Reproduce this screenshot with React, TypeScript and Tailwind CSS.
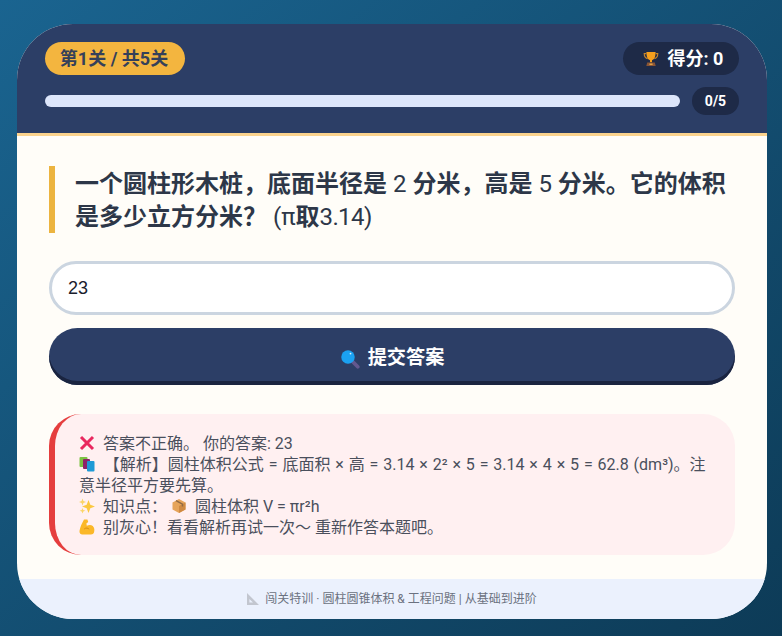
import React from 'react';

const sans = "font-['Roboto','Noto_Sans_CJK_SC',sans-serif]";

const IconBox: React.FC<{ size?: number; children: React.ReactNode }> = ({ size = 16, children }) => (
  <svg viewBox="0 0 16 16" width={size} height={size} className="mr-1 inline-block shrink-0 align-[-2px]">
    {children}
  </svg>
);

const Trophy = () => (
  <svg viewBox="0 0 16 16" width={16} height={18} className="shrink-0">
    <path d="M3.2 2.6H1.2c0 3 1.2 4.6 3.4 5M12.8 2.6h2c0 3-1.2 4.6-3.4 5" fill="none" stroke="#c9852a" strokeWidth="1.1" />
    <path d="M3.4 1h9.2c0 4.4-1 7.6-3.6 8.2v2H7V9.2C4.4 8.6 3.4 5.4 3.4 1z" fill="#f59f1d" />
    <path d="M4.2 11.4h7.6l.9 3.6H3.3z" fill="#8a5535" />
    <rect x="6.4" y="12.6" width="3.2" height="1.2" fill="#f2b34c" />
  </svg>
);

const Search = () => (
  <svg viewBox="0 0 16 16" width={20} height={20} className="shrink-0">
    <path d="M10 10l4.2 4.2" stroke="#62588f" strokeWidth="3" strokeLinecap="round" />
    <circle cx="6.4" cy="6.4" r="5.4" fill="#1ba1f1" />
    <circle cx="8.4" cy="3.6" r="0.7" fill="#d8f1ff" />
  </svg>
);

const Cross = () => (
  <IconBox>
    <path d="M2 2l12 12M14 2L2 14" stroke="#e9285f" strokeWidth="3" />
  </IconBox>
);

const Books = () => (
  <IconBox>
    <rect x="0.5" y="1" width="8" height="10" rx="1" fill="#7cc242" />
    <rect x="4" y="3" width="7" height="10" rx="1" fill="#8f2268" />
    <rect x="8" y="5" width="7.5" height="10.5" rx="1" fill="#1f9ad6" />
  </IconBox>
);

const Sparkles = () => (
  <IconBox>
    <path d="M9.5 2l1.8 4.7L16 8.5l-4.7 1.8L9.5 15l-1.8-4.7L3 8.5l4.7-1.8z" fill="#fbc83f" />
    <path d="M3.5 .5l.9 2.6L7 4l-2.6.9-.9 2.6-.9-2.6L0 4l2.6-.9z" fill="#fbd566" />
    <path d="M3.5 10l.8 2 2 .8-2 .8-.8 2-.8-2-2-.8 2-.8z" fill="#fbd566" />
  </IconBox>
);

const Package = () => (
  <IconBox>
    <path d="M8 1l6.5 3.4v7.2L8 15l-6.5-3.4V4.4z" fill="#e6a45a" />
    <path d="M8 8l6.5-3.6v7.2L8 15z" fill="#cf8a42" />
    <path d="M5 2.6l6.5 3.6v2.4" fill="none" stroke="#8f6a44" strokeWidth="1.4" />
  </IconBox>
);

const Muscle = () => (
  <IconBox>
    <path d="M5 .5h3.4l.8 2.6-1.8 1.3.4 2.4C9.8 5.6 12.2 5.6 13.8 7c1.8 1.5 1.8 4.6 1.2 6.4-.4 1.3-1.5 2-3 2H3.4C1.4 15.4.2 14 .5 12c.5-3.4 2.4-7.8 4.5-11.5z" fill="#fbb829" />
    <path d="M5.2 10c1.6-1.4 4-1.2 5 .4" fill="none" stroke="#d98d14" strokeWidth="1" />
  </IconBox>
);

const SetSquare = () => (
  <svg viewBox="0 0 12 12" width={12} height={12} className="inline-block shrink-0">
    <path fillRule="evenodd" d="M0 0l12 12H0zM2.4 6v3.6H6z" fill="#c2c6cf" />
  </svg>
);

const App: React.FC = () => (
  <div className={`flex h-[636px] w-[782px] items-start overflow-hidden bg-gradient-to-br from-[#1a6490] to-[#0d3b57] pt-6 pl-[17px] ${sans}`}>
    <div className="flex h-[595px] w-[750px] flex-col overflow-hidden rounded-[56px] bg-[#fffdf8]">
      <div className="h-[112px] shrink-0 border-b-[3px] border-[#fbd38d] bg-[#2c3e66] px-7 pt-[18px]">
        <div className="flex items-center justify-between">
          <span className="flex h-[33px] w-[140px] items-center justify-center rounded-full bg-[#f3b53f] pr-0.5 text-lg font-bold text-[#34405a]">第1关 / 共5关</span>
          <span className="flex h-[33px] w-[116px] items-center justify-center gap-[9px] rounded-full bg-[#1e2a47] pl-1 text-lg font-bold text-white">
            <Trophy />
            <span>得分: 0</span>
          </span>
        </div>
        <div className="mt-3 flex items-center gap-3">
          <div className="h-3 flex-1 rounded-full bg-[#dde6fb]" />
          <span className="flex h-7 w-[47px] items-center justify-center rounded-full bg-[#1e2a47] text-sm font-bold text-white">0/5</span>
        </div>
      </div>

      <div className="flex-1 px-8 pt-[30px]">
        <h1 className="h-[67px] border-l-[6px] border-[#ecb440] pt-0.5 pl-5 text-2xl leading-[33px] font-bold text-[#2d3748]">
          一个圆柱形木桩，底面半径是 <span className="font-normal">2</span> 分米，高是 <span className="font-normal">5</span> 分米。它的体积是多少立方分米？ <span className="font-normal">(π</span>取<span className="font-normal tracking-[-0.6px]">3.14)</span>
        </h1>
        <input
          readOnly
          value="23"
          className="mt-7 block h-[54px] w-full rounded-full border-[3px] border-[#cbd5e0] bg-white pl-4 font-['Liberation_Sans',sans-serif] text-lg text-[#1a202c] outline-none"
        />
        <button className="mt-[13px] flex h-[57px] w-full items-center justify-center gap-2 rounded-full bg-[#2c3e66] pt-1 text-[19.2px] font-bold text-white shadow-[inset_0_-4px_0_#1a2440]">
          <Search />
          <span>提交答案</span>
        </button>
        <div className="mt-[29px] h-[141px] rounded-[32px] border-l-[6px] border-[#e53e3e] bg-[#fff0f1] pt-[19px] pr-6 pl-6 text-base leading-[21px] text-[#4a4f5c]">
          <div><Cross /> 答案不正确。 你的答案: 23</div>
          <div className="[word-spacing:0.9px]"><Books /> 【解析】圆柱体积公式 = 底面积 × 高 = 3.14 × 2² × 5 = 3.14 × 4 × 5 = 62.8 (dm³)。注意半径平方要先算。</div>
          <div><Sparkles /> 知识点： <Package /> 圆柱体积 V = πr²h</div>
          <div><Muscle /> 别灰心！看看解析再试一次～ 重新作答本题吧。</div>
        </div>
      </div>

      <div className="flex h-10 shrink-0 items-center justify-center gap-1.5 bg-[#ebf1fd] text-xs text-[#6b7280]">
        <SetSquare />
        <span>闯关特训 · 圆柱圆锥体积 &amp; 工程问题 | 从基础到进阶</span>
      </div>
    </div>
  </div>
);

export default App;
